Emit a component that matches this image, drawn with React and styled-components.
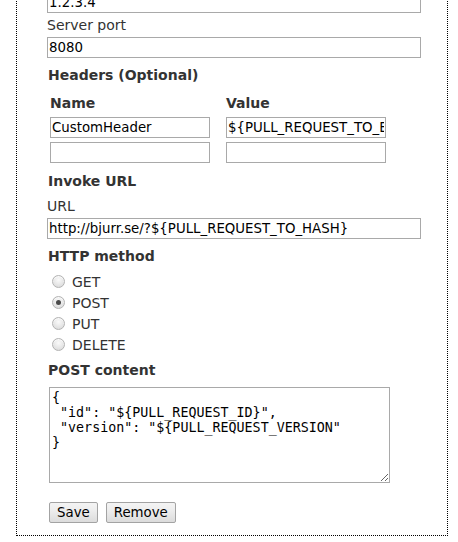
import React from 'react';
import styled, { createGlobalStyle } from 'styled-components';

const GlobalStyle = createGlobalStyle`
  html, body {
    margin: 0;
    background: #fff;
  }
  body {
    font-family: 'DejaVu Sans', 'Noto Sans', sans-serif;
    font-size: 14px;
    color: #333;
  }
`;

const Panel = styled.div`
  box-sizing: border-box;
  width: 432px;
  margin: -39px 0 0 16px;
  padding: 10px 0 12px 30px;
  border: 1px dotted #000;
  display: flex;
  flex-direction: column;
  align-items: flex-start;
`;

const FieldLabel = styled.label`
  display: block;
  line-height: 16px;
  margin: ${(p) => p.$top ?? 4}px 0 4px 0;
`;

const TextInput = styled.input`
  box-sizing: border-box;
  width: ${(p) => p.$width || 374}px;
  height: 21px;
  margin: 0;
  padding: 0 1px;
  border: 1px solid #a9a9a9;
  background: #fff;
  color: #000;
  font-family: 'DejaVu Sans', sans-serif;
  font-size: 13.33px;
  outline: none;
`;

const SectionTitle = styled.div`
  font-weight: bold;
  line-height: 16px;
  margin: ${(p) => p.$top ?? 9}px 0 0 1px;
`;

const HeaderTable = styled.div`
  display: grid;
  grid-template-columns: 160px 160px;
  column-gap: 16px;
  row-gap: 4px;
  margin: 12px 0 0 3px;
`;

const ColumnHead = styled.div`
  font-weight: bold;
  line-height: 16px;
  margin-bottom: 2px;
`;

const RadioList = styled.div`
  display: flex;
  flex-direction: column;
  gap: 5px;
  margin-top: 10px;
`;

const RadioRow = styled.label`
  display: flex;
  align-items: center;
  line-height: 16px;
  height: 16px;
`;

const Radio = styled.input.attrs({ type: 'radio' })`
  appearance: none;
  box-sizing: border-box;
  width: 13px;
  height: 13px;
  margin: 0 7px 2px 5px;
  border: 1px solid #b3b3b3;
  border-radius: 50%;
  background: radial-gradient(circle at 50% 35%, #fafafa 0%, #e6e6e6 55%, #d6d6d6 100%);
  box-shadow: inset 0 1px 1px rgba(255, 255, 255, 0.8);
  display: grid;
  place-items: center;

  &:checked::after {
    content: '';
    width: 5px;
    height: 5px;
    border-radius: 50%;
    background: #4a4a4a;
  }
`;

const BodyArea = styled.textarea`
  box-sizing: border-box;
  width: 341px;
  height: 96px;
  margin: 9px 0 0 2px;
  padding: 2px;
  border: 1px solid #a9a9a9;
  color: #000;
  font-family: 'DejaVu Sans Mono', monospace;
  font-size: 13.33px;
  line-height: 15px;
  resize: both;
  outline: none;
`;

const ButtonBar = styled.div`
  display: flex;
  gap: 8px;
  margin: 19px 0 0 2px;
`;

const Button = styled.button`
  box-sizing: border-box;
  height: 21px;
  padding: 0 7px;
  border: 1px solid #a3a3a3;
  border-radius: 2px;
  background: linear-gradient(#f4f4f4, #ededed 40%, #dcdcdc);
  color: #000;
  font-family: 'DejaVu Sans', sans-serif;
  font-size: 13.33px;
  line-height: 17px;
`;

const methods = ['GET', 'POST', 'PUT', 'DELETE'];

const body = `{
 "id": "\${PULL_REQUEST_ID}",
 "version": "\${PULL_REQUEST_VERSION"
}`;

export default function App() {
  return (
    <>
      <GlobalStyle />
      <Panel>
        <FieldLabel $top={0}>Server address</FieldLabel>
        <TextInput defaultValue="1.2.3.4" />
        <FieldLabel>Server port</FieldLabel>
        <TextInput defaultValue="8080" />

        <SectionTitle>Headers (Optional)</SectionTitle>
        <HeaderTable>
          <ColumnHead>Name</ColumnHead>
          <ColumnHead>Value</ColumnHead>
          <TextInput $width={160} defaultValue="CustomHeader" />
          <TextInput $width={160} defaultValue="${PULL_REQUEST_TO_BRANCH}" />
          <TextInput $width={160} defaultValue="" />
          <TextInput $width={160} defaultValue="" />
        </HeaderTable>

        <SectionTitle $top={10}>Invoke URL</SectionTitle>
        <FieldLabel $top={9}>URL</FieldLabel>
        <TextInput defaultValue="http://bjurr.se/?${PULL_REQUEST_TO_HASH}" />

        <SectionTitle>HTTP method</SectionTitle>
        <RadioList>
          {methods.map((m) => (
            <RadioRow key={m}>
              <Radio name="method" defaultChecked={m === 'POST'} />
              {m}
            </RadioRow>
          ))}
        </RadioList>

        <SectionTitle>POST content</SectionTitle>
        <BodyArea defaultValue={body} spellCheck={false} />

        <ButtonBar>
          <Button>Save</Button>
          <Button>Remove</Button>
        </ButtonBar>
      </Panel>
    </>
  );
}
